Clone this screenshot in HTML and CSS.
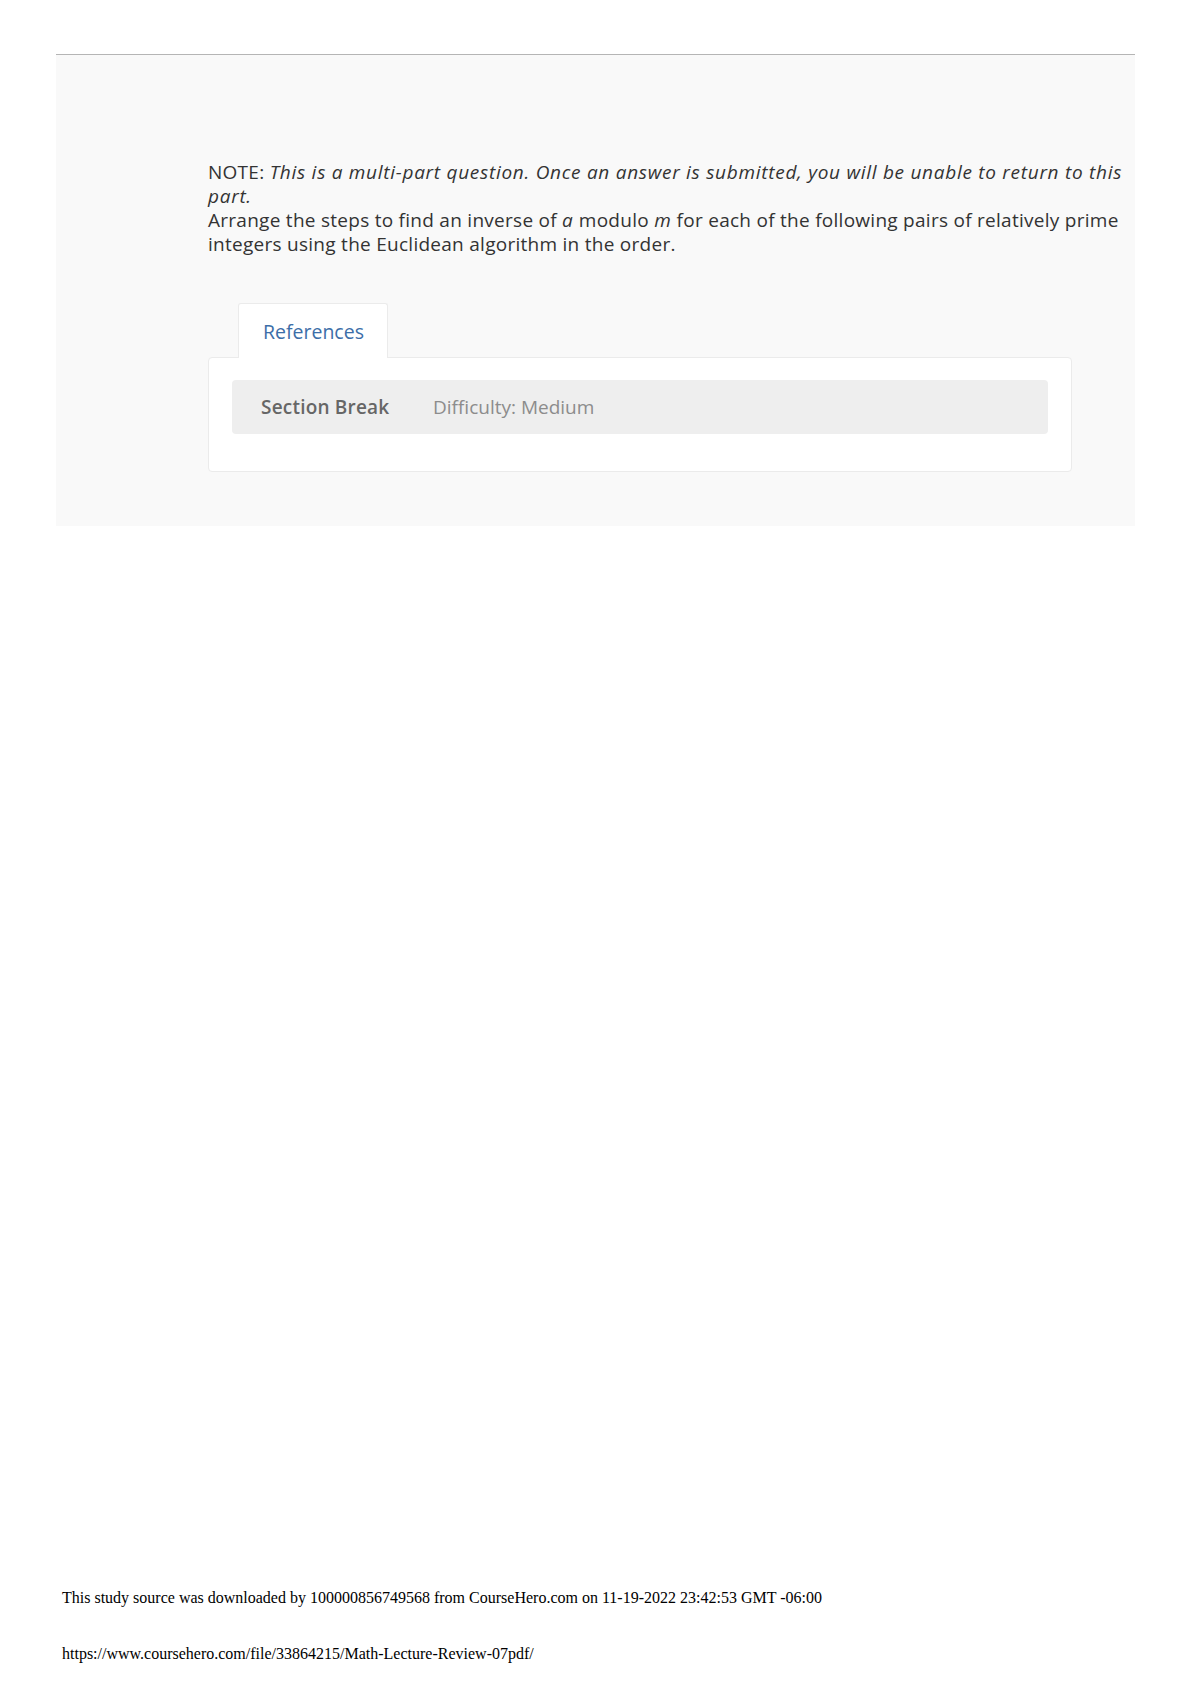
FILE: index.html
```html
<!DOCTYPE html>
<html lang="en">
<head>
    <meta charset="UTF-8">
    <title>Math Lecture Review 07</title>
    <link rel="stylesheet" href="styles.css">
</head>
<body>
    <div class="sheet">
        <div class="question">
            <p class="prompt">
                NOTE: <em>This is a multi-part question. Once an answer is submitted, you will be unable to return to this part.</em><br>
                Arrange the steps to find an inverse of <em>a</em> modulo <em>m</em> for each of the following pairs of relatively prime integers using the Euclidean algorithm in the order.
            </p>

            <div class="tabs">
                <div class="tab active">References</div>
            </div>
            <div class="panel">
                <div class="meta-row">
                    <span class="meta-title">Section Break</span>
                    <span class="meta-value">Difficulty: Medium</span>
                </div>
            </div>
        </div>
    </div>

    <div class="footer">
        <p>This study source was downloaded by 100000856749568 from CourseHero.com on 11-19-2022 23:42:53 GMT -06:00</p>
        <p class="url">https://www.coursehero.com/file/33864215/Math-Lecture-Review-07pdf/</p>
    </div>
</body>
</html>
```

FILE: styles.css
```css
body {
    margin: 0;
    font-family: "Open Sans", "Noto Sans", sans-serif;
    color: #333;
    background-color: #fff;
    width: 1190px;
    height: 1682px;
    position: relative;
}
.sheet {
    margin: 54px 0 0 56px;
    width: 1079px;
    border-top: 1px solid #b5b5b5;
    background-color: #f9f9f9;
    padding: 105px 0 54px 152px;
    box-sizing: border-box;
}
.question {
    width: 924px;
}
.prompt {
    margin: 0;
    font-size: 19px;
    line-height: 24px;
    letter-spacing: 0.27px;
}
.prompt em {
    font-style: italic;
    letter-spacing: 0.72px;
}
.tabs {
    display: flex;
    margin-top: 47px;
    padding-left: 30px;
}
.tab {
    width: 150px;
    height: 55px;
    box-sizing: border-box;
    padding: 14px 0 0 24px;
    background-color: #fff;
    border: 1px solid #ebebeb;
    border-bottom: none;
    border-radius: 3px 3px 0 0;
    font-size: 19.5px;
    color: #3c6ea8;
    margin-bottom: -1px;
    position: relative;
    z-index: 1;
}
.panel {
    width: 864px;
    height: 115px;
    box-sizing: border-box;
    background-color: #fff;
    border: 1px solid #ebebeb;
    border-radius: 4px;
    padding: 22px 23px 0 23px;
}
.meta-row {
    height: 54px;
    display: flex;
    align-items: center;
    background-color: #eee;
    border-radius: 4px;
    padding-left: 29px;
    font-size: 19px;
}
.meta-title {
    font-weight: 600;
    color: #666;
    width: 172px;
    letter-spacing: 0.2px;
}
.meta-value {
    color: #8c8c8c;
}
.footer {
    position: absolute;
    left: 62px;
    top: 1589px;
    font-family: "Liberation Serif", serif;
    font-size: 16px;
    color: #000;
}
.footer p {
    margin: 0;
}
.footer .url {
    margin-top: 38px;
}
```
